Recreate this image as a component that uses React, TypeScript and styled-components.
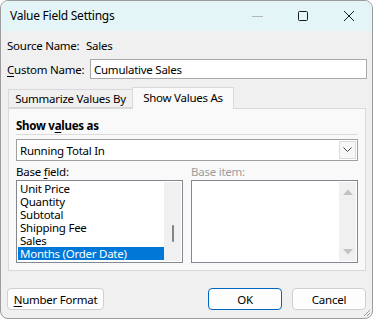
import { FC } from "react";
import styled, { createGlobalStyle } from "styled-components";

const GlobalStyle = createGlobalStyle`
  html, body {
    margin: 0;
    padding: 0;
    background: #ffffff;
  }
  body {
    font-family: "Noto Sans", "Open Sans", sans-serif;
    font-size: 11.5px;
    letter-spacing: -0.25px;
    color: #000;
  }
  * {
    box-sizing: border-box;
  }
  u {
    text-underline-offset: 2px;
  }
`;

const baseFields = [
  "Unit Price",
  "Quantity",
  "Subtotal",
  "Shipping Fee",
  "Sales",
  "Months (Order Date)",
];

const App: FC = () => {
  return (
    <>
      <GlobalStyle />
      <Window>
        <TitleBar>
          <Title>Value Field Settings</Title>
          <Caption>
            <CaptionButton>
              <svg width="12" height="12" viewBox="0 0 12 12">
                <line x1="1" y1="6.5" x2="12" y2="6.5" stroke="#b5b5b5" />
              </svg>
            </CaptionButton>
            <CaptionButton>
              <svg width="12" height="12" viewBox="0 0 12 12">
                <rect x="1.5" y="1.5" width="9" height="9" rx="1" fill="none" stroke="#1a1a1a" />
              </svg>
            </CaptionButton>
            <CaptionButton>
              <svg width="12" height="12" viewBox="0 0 12 12">
                <path d="M1 1 L11 11 M11 1 L1 11" stroke="#1a1a1a" strokeWidth="1" />
              </svg>
            </CaptionButton>
          </Caption>
        </TitleBar>

        <Body>
          <InfoRow>
            <Label>Source Name:</Label>
            <span>Sales</span>
          </InfoRow>
          <NameRow>
            <Label>
              <u>C</u>ustom Name:
            </Label>
            <TextInput>Cumulative Sales</TextInput>
          </NameRow>

          <Tabs>
            <Tab width={124}>Summarize Values By</Tab>
            <Tab width={102} selected>
              Show Values As
            </Tab>
          </Tabs>
          <Panel>
            <SectionTitle>
              <span>
                Show v<u>a</u>lues as
              </span>
            </SectionTitle>
            <Rule />
            <Combo>
              <ComboText>Running Total In</ComboText>
              <ComboArrow>
                <svg width="9" height="6" viewBox="0 0 9 6">
                  <path d="M0.5 0.5 L4.5 4.5 L8.5 0.5" fill="none" stroke="#444" />
                </svg>
              </ComboArrow>
            </Combo>
            <Columns>
              <Column>
                <FieldLabel>
                  <span>
                    Base <u>f</u>ield:
                  </span>
                </FieldLabel>
                <ListBox>
                  <Items>
                    {baseFields.map((f, i) => (
                      <Item key={f} selected={i === baseFields.length - 1}>
                        {f}
                      </Item>
                    ))}
                  </Items>
                  <ScrollTrack>
                    <Thumb />
                  </ScrollTrack>
                </ListBox>
              </Column>
              <Column>
                <FieldLabel disabled>Base item:</FieldLabel>
                <ListBox>
                  <Items />
                  <ScrollTrack arrows>
                    <svg width="10" height="6" viewBox="0 0 10 6">
                      <path d="M0 6 L5 0.5 L10 6 Z" fill="#c2c2c2" />
                    </svg>
                    <svg width="10" height="6" viewBox="0 0 10 6">
                      <path d="M0 0 L5 5.5 L10 0 Z" fill="#c2c2c2" />
                    </svg>
                  </ScrollTrack>
                </ListBox>
              </Column>
            </Columns>
          </Panel>

          <Footer>
            <Button width={97}>
              <span>
                <u>N</u>umber Format
              </span>
            </Button>
            <Spacer />
            <Button width={74} primary>
              OK
            </Button>
            <Button width={74}>Cancel</Button>
          </Footer>
        </Body>
        <Grip>
          <svg width="8" height="8" viewBox="0 0 8 8">
            <path d="M7 1 L1 7 M7 4 L4 7" stroke="#9a9a9a" strokeWidth="1" />
          </svg>
        </Grip>
      </Window>
    </>
  );
};

export default App;

const Window = styled.div`
  position: relative;
  width: 373px;
  height: 319px;
  border: 1px solid #9c9c9c;
  border-radius: 8px;
  background: #f0f0f0;
  overflow: hidden;
  display: flex;
  flex-direction: column;
`;

const TitleBar = styled.div`
  height: 30px;
  flex: none;
  display: flex;
  align-items: center;
  background: #e4f5f8;
`;

const Title = styled.div`
  flex: 1;
  padding-left: 9px;
  font-size: 12px;
  margin-top: -1px;
`;

const Caption = styled.div`
  display: flex;
  height: 100%;
`;

const CaptionButton = styled.div`
  width: 46px;
  height: 100%;
  display: flex;
  align-items: center;
  justify-content: center;
  padding-bottom: 1px;
`;

const Body = styled.div`
  flex: 1;
  display: flex;
  flex-direction: column;
  padding: 6px 5px 0 6px;
`;

const InfoRow = styled.div`
  height: 16px;
  display: flex;
  align-items: center;
  white-space: nowrap;
`;

const Label = styled.span`
  width: 79px;
  flex: none;
  white-space: nowrap;
`;

const NameRow = styled.div`
  height: 20px;
  margin-top: 6px;
  display: flex;
  align-items: center;
`;

const TextInput = styled.div`
  margin-left: 4px;
  flex: 1;
  height: 20px;
  border: 1px solid #a9a9a9;
  background: #fff;
  padding-left: 3px;
  display: flex;
  align-items: center;
`;

const Tabs = styled.div`
  margin-top: 8px;
  margin-left: 1px;
  height: 21px;
  display: flex;
  align-items: flex-end;
  position: relative;
  z-index: 1;
`;

const Tab = styled.div<{ width: number; selected?: boolean }>`
  width: ${({ width }) => width}px;
  height: ${({ selected }) => (selected ? "22px" : "19px")};
  margin-bottom: ${({ selected }) => (selected ? "-1px" : "0")};
  padding-bottom: ${({ selected }) => (selected ? "3px" : "0")};
  display: flex;
  align-items: center;
  justify-content: center;
  white-space: nowrap;
  border: 1px solid #d9d9d9;
  border-bottom: ${({ selected }) => (selected ? "none" : "1px solid #d9d9d9")};
  border-right: ${({ selected }) => (selected ? "1px solid #d9d9d9" : "none")};
  background: ${({ selected }) => (selected ? "#f9f9f9" : "#f0f0f0")};
`;

const Panel = styled.div`
  margin-left: 1px;
  width: 358px;
  height: 163px;
  border: 1px solid #d9d9d9;
  background: #f9f9f9;
  padding: 8px 7px 0 7px;
  display: flex;
  flex-direction: column;
`;

const SectionTitle = styled.div`
  font-weight: 700;
  height: 16px;
  display: flex;
  align-items: center;
`;

const Rule = styled.div`
  height: 1px;
  background: #dcdcdc;
  margin-top: 1px;
`;

const Combo = styled.div`
  margin-top: 4px;
  height: 22px;
  border: 1px solid #a0a0a0;
  background: #fff;
  display: flex;
`;

const ComboText = styled.div`
  flex: 1;
  padding-left: 3px;
  display: flex;
  align-items: center;
`;

const ComboArrow = styled.div`
  width: 17px;
  margin: 1px;
  border: 1px solid #dadada;
  background: #f7f7f7;
  display: flex;
  align-items: center;
  justify-content: center;
`;

const Columns = styled.div`
  margin-top: 2px;
  display: flex;
  gap: 8px;
`;

const Column = styled.div`
  width: 167px;
  display: flex;
  flex-direction: column;
`;

const FieldLabel = styled.div<{ disabled?: boolean }>`
  height: 17px;
  display: flex;
  align-items: center;
  white-space: nowrap;
  color: ${({ disabled }) => (disabled ? "#9d9d9d" : "#000")};
`;

const ListBox = styled.div`
  height: 83px;
  border: 1px solid #828790;
  background: #fff;
  display: flex;
  padding: 1px;
`;

const Items = styled.div`
  flex: 1;
  display: flex;
  flex-direction: column;
`;

const Item = styled.div<{ selected?: boolean }>`
  height: 13px;
  line-height: 13px;
  padding-left: 2px;
  white-space: nowrap;
  background: ${({ selected }) => (selected ? "#0078d7" : "transparent")};
  color: ${({ selected }) => (selected ? "#fff" : "#000")};
`;

const ScrollTrack = styled.div<{ arrows?: boolean }>`
  width: 17px;
  background: #f0f0f0;
  display: flex;
  flex-direction: column;
  align-items: center;
  justify-content: ${({ arrows }) => (arrows ? "space-between" : "flex-end")};
  padding: ${({ arrows }) => (arrows ? "7px 0 6px" : "0 0 19px")};
`;

const Thumb = styled.div`
  width: 2px;
  height: 17px;
  border-radius: 1px;
  background: #858585;
`;

const Footer = styled.div`
  margin-top: 17px;
  height: 22px;
  display: flex;
  gap: 10px;
  padding-right: 1px;
`;

const Spacer = styled.div`
  flex: 1;
`;

const Button = styled.div<{ width: number; primary?: boolean }>`
  width: ${({ width }) => width}px;
  height: 22px;
  border: 1px solid ${({ primary }) => (primary ? "#0067c0" : "#d0d0d0")};
  border-radius: 4px;
  background: #fdfdfd;
  display: flex;
  align-items: center;
  justify-content: center;
  white-space: nowrap;
`;

const Grip = styled.div`
  position: absolute;
  right: 1px;
  bottom: 1px;
  width: 8px;
  height: 8px;
  display: flex;
`;
